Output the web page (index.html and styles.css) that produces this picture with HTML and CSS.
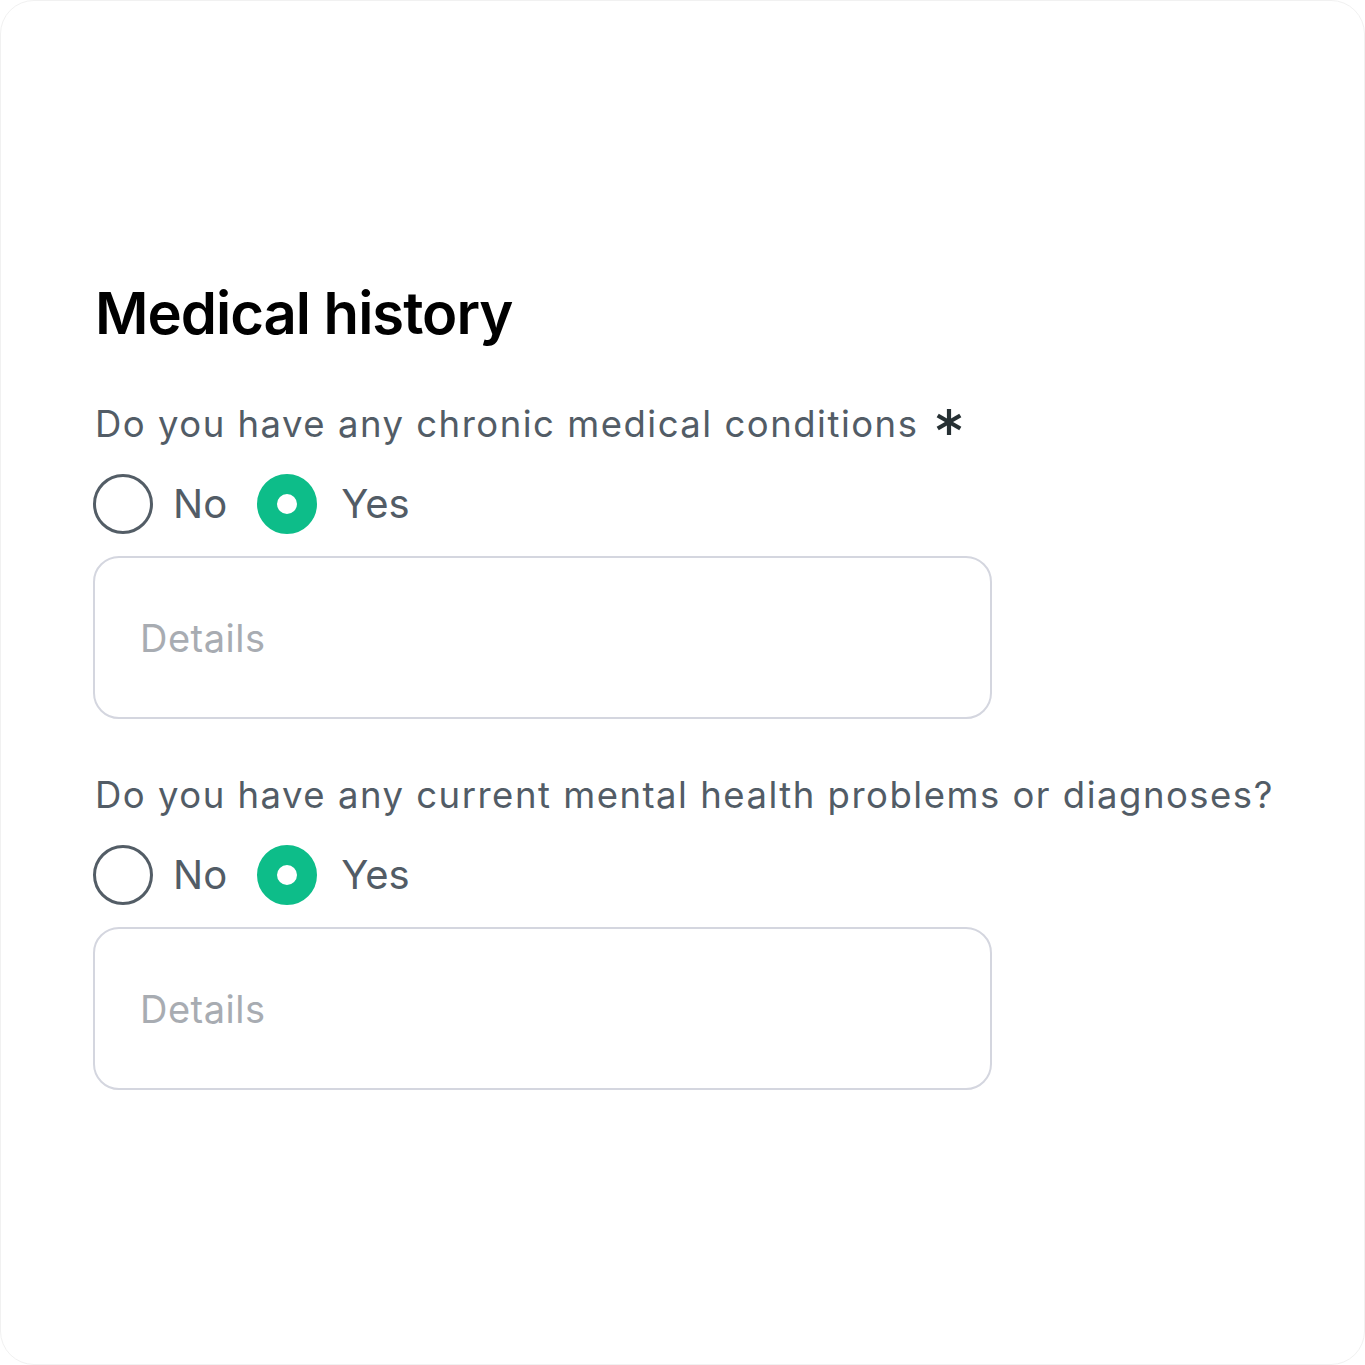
FILE: index.html
```html
<!DOCTYPE html>
<html lang="en">
<head>
<meta charset="utf-8">
<title>Medical history</title>
<link rel="stylesheet" href="styles.css">
</head>
<body>
<main class="card">
  <h1 class="title">Medical history</h1>

  <section class="question">
    <div class="q-label">
      <span>Do you have any chronic medical conditions</span>
      <svg class="asterisk" viewBox="0 0 28 28" width="28" height="28" aria-hidden="true">
        <g stroke="#263033" stroke-width="4.2" stroke-linecap="butt">
          <line x1="14" y1="1" x2="14" y2="27"/>
          <line x1="2.7" y1="7.5" x2="25.3" y2="20.5"/>
          <line x1="2.7" y1="20.5" x2="25.3" y2="7.5"/>
        </g>
      </svg>
    </div>
    <div class="radios">
      <label class="radio"><span class="dot"></span><span class="r-text">No</span></label>
      <label class="radio"><span class="dot checked"></span><span class="r-text">Yes</span></label>
    </div>
    <div class="field"><span class="placeholder">Details</span></div>
  </section>

  <section class="question">
    <div class="q-label">
      <span>Do you have any current mental health problems or diagnoses?</span>
    </div>
    <div class="radios">
      <label class="radio"><span class="dot"></span><span class="r-text">No</span></label>
      <label class="radio"><span class="dot checked"></span><span class="r-text">Yes</span></label>
    </div>
    <div class="field"><span class="placeholder">Details</span></div>
  </section>
</main>
</body>
</html>
```

FILE: styles.css
```css
* { box-sizing: border-box; }

html, body {
  margin: 0;
  padding: 0;
  background: #ffffff;
}

body {
  font-family: Inter, "Noto Sans", sans-serif;
}

.card {
  width: 1365px;
  height: 1365px;
  border: 1px solid #f1f1f1;
  border-radius: 34px;
  background: #ffffff;
  padding: 277px 0 0 92px;
  display: flex;
  flex-direction: column;
}

.title {
  margin: 0;
  font-size: 58px;
  line-height: 70px;
  font-weight: 600;
  color: #000000;
  letter-spacing: -1px;
  padding-left: 2px;
}

.question {
  display: flex;
  flex-direction: column;
  margin-top: 54px;
}

.question + .question {
  margin-top: 54px;
}

.q-label {
  display: flex;
  align-items: center;
  gap: 17px;
  font-size: 36.5px;
  line-height: 44px;
  color: #525c66;
  letter-spacing: 1.5px;
  padding-left: 2px;
}

.asterisk {
  display: block;
  margin-top: -4px;
}

.radios {
  display: flex;
  align-items: center;
  gap: 30px;
  margin-top: 28px;
  height: 60px;
}

.radio {
  display: flex;
  align-items: center;
  gap: 20px;
}

.dot {
  width: 60px;
  height: 60px;
  border-radius: 50%;
  border: 3px solid #535d66;
  flex: none;
}

.dot.checked {
  border: 20px solid #0dbd89;
  background: #ffffff;
}

.r-text {
  font-size: 40px;
  line-height: 60px;
  color: #525c66;
}

.radio + .radio .r-text {
  margin-left: 4px;
}

.field {
  margin-top: 22px;
  width: 899px;
  height: 163px;
  border: 2px solid #d4d6df;
  border-radius: 26px;
  display: flex;
  align-items: center;
  padding-left: 45px;
}

.placeholder {
  font-size: 38px;
  color: #a8acb2;
  letter-spacing: 0.5px;
}
```
